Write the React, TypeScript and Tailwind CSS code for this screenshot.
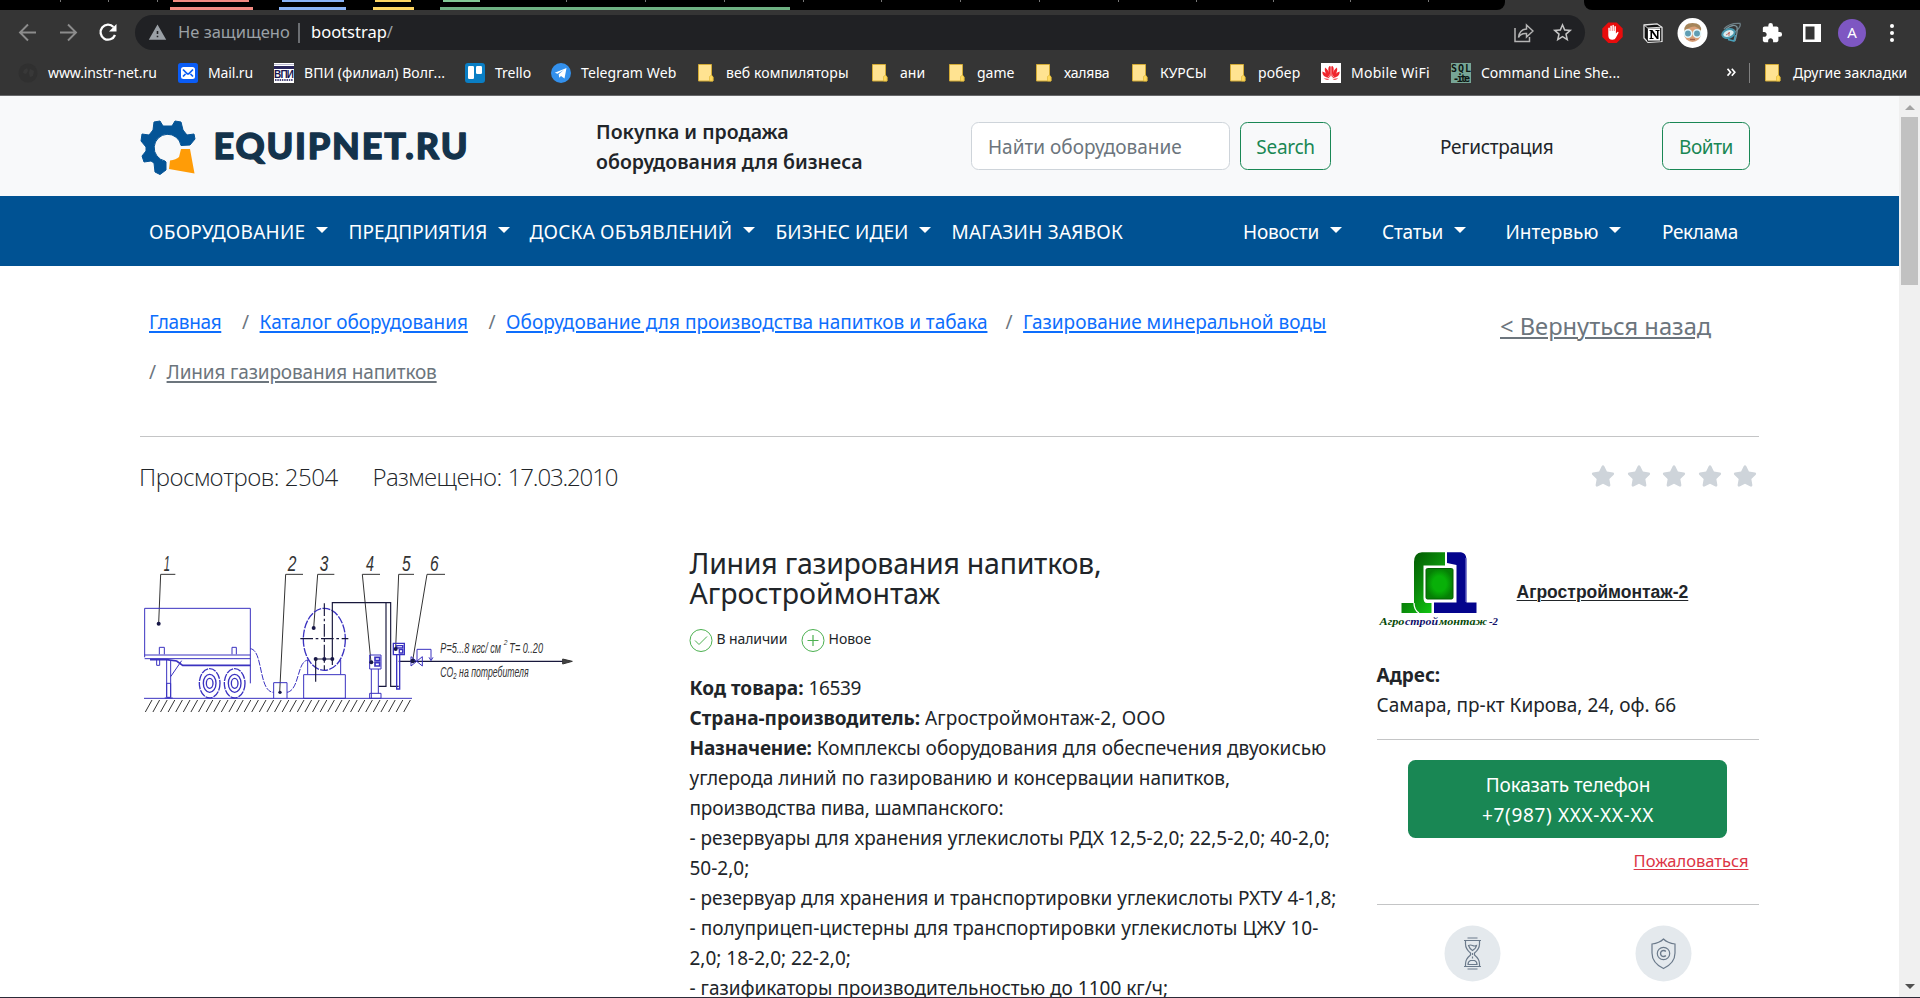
import React from "react";
import { FaStar } from "react-icons/fa";
import { MdExtension, MdStarBorder, MdWarning } from "react-icons/md";

const Folder = () => (
  <svg width="20" height="20" viewBox="0 0 20 20">
    <path d="M2.500 1.500h13v11l1.500 1.500v4h-14.500z" fill="#ffe391" stroke="#d3ab35" strokeWidth="1" />
    <path d="M13.500 18v-4.500l2-1.500 1.500 2v4z" fill="#ffd95c" stroke="#e0b93c" strokeWidth=".7" />
  </svg>
);

const Globe = () => (
  <svg width="20" height="20" viewBox="0 0 20 20">
    <circle cx="10" cy="10" r="9.500" fill="#303030" />
    <path d="M6 7l3-2 1 3-2 3-3-1zM12 6l4 2-1 5-3 1-1-4z" fill="#383838" />
  </svg>
);

const Mail = () => (
  <svg width="20" height="20" viewBox="0 0 20 20">
    <rect width="20" height="20" rx="2.500" fill="#0a5cf5" />
    <rect x="3" y="4" width="14" height="12" rx="2.500" fill="#fff" />
    <path d="M5 6.500l4 4q1 .8 2 0l4-4M5 13.500l2.500-2.500M15 13.500l-2.500-2.500" stroke="#0a5cf5" strokeWidth="1.700" fill="none" />
  </svg>
);

const Vpi = () => (
  <svg width="20" height="20" viewBox="0 0 20 20">
    <rect width="20" height="20" fill="#fff" />
    <rect y="3" width="20" height="3" fill="#29265c" />
    <path d="M0 1.500h20" stroke="#aaa8c4" strokeWidth=".8" />
    <text x="0" y="14.500" fontSize="10" fontWeight="900" fontFamily="Liberation Sans" fill="#19164f" textLength="20">ВПИ</text>
    <path d="M1 17h18" stroke="#4e4b7a" strokeWidth="2" strokeDasharray="1.500 .8" />
  </svg>
);

const Trello = () => (
  <svg width="20" height="20" viewBox="0 0 20 20">
    <rect width="20" height="20" rx="3" fill="#0a7ec4" />
    <rect x="3" y="3" width="6" height="13" rx="1.200" fill="#fff" />
    <rect x="11" y="3" width="6" height="8" rx="1.200" fill="#fff" />
  </svg>
);

const Telegram = () => (
  <svg width="20" height="20" viewBox="0 0 20 20">
    <circle cx="10" cy="10" r="10" fill="#3390ec" />
    <path d="M3.800 9.800L15.500 5l-2 10.500-3.500-2.600-1.800 1.800-.5-3.500 5-4.300-6.200 3.900z" fill="#fff" />
  </svg>
);

const Huawei = () => (
  <svg width="20" height="20" viewBox="0 0 20 20">
    <rect width="20" height="20" fill="#fff" />
    <g fill="#f0252d">
      <path d="M9.700 14Q5.500 6 8.500 3q1-.5 1.200 1zM10.300 14q4.200-8 1.200-11-1-.5-1.200 1zM9 14.500Q2.500 10 4 4.500q4 2 5 10zM11 14.500q6.500-4.500 5-10-4 2-5 10zM8.500 15.200Q1 14 1.300 8.500q4 1 7.200 6.700zM11.500 15.200q7.500-1.200 7.200-6.700-4 1-7.200 6.700zM8.300 15.900q-3 2-5.600-.6zM11.700 15.900q3 2 5.600-.6z" />
    </g>
  </svg>
);

const Sqlite = () => (
  <svg width="20" height="20" viewBox="0 0 20 20">
    <rect width="20" height="20" fill="#77a595" />
    <g fontFamily="DejaVu Sans Mono" fontWeight="700" fontSize="10" fill="#0c1512">
      <text x="0" y="9" textLength="20">SQL</text>
      <text x="2" y="18.500" textLength="17">-ite</text>
    </g>
  </svg>
);

const bookmarks: [React.FC, string, string, string][] = [
  [Globe, "www.instr-net.ru", "w-[160px]", "tracking-[-0.1px]"],
  [Mail, "Mail.ru", "w-[96px]", "tracking-[-0.15px]"],
  [Vpi, "ВПИ (филиал) Волг...", "w-[191px]", "tracking-[0.05px]"],
  [Trello, "Trello", "w-[86px]", ""],
  [Telegram, "Telegram Web", "w-[145px]", "tracking-[0.1px]"],
  [Folder, "веб компиляторы", "w-[174px]", "tracking-[0.1px]"],
  [Folder, "ани", "w-[77px]", ""],
  [Folder, "game", "w-[87px]", ""],
  [Folder, "халява", "w-[96px]", "tracking-[-0.2px]"],
  [Folder, "КУРСЫ", "w-[98px]", ""],
  [Folder, "робер", "w-[93px]", "tracking-[0.2px]"],
  [Huawei, "Mobile WiFi", "w-[130px]", "tracking-[0.25px]"],
  [Sqlite, "Command Line She...", "w-[170px]", ""],
];

const tabSeams = [
  "left-[60px]", "left-[108px]", "left-[157px]", "left-[566px]", "left-[645px]", "left-[724px]", "left-[803px]", "left-[881px]",
  "left-[960px]", "left-[1039px]", "left-[1118px]", "left-[1196px]", "left-[1273px]", "left-[1350px]", "left-[1428px]",
];

const tabMarks = [
  "left-[173px] w-[76px] h-[2px] bg-[#f28b82]", "left-[282px] w-[62px] h-[2px] bg-[#8ab4f8]",
  "left-[375px] w-[36px] h-[2px] bg-[#fdd663]", "left-[443px] w-[37px] h-[2px] bg-[#81c995]",
  "left-[170px] top-[7px] w-[83px] h-[3px] bg-[#f28b82]", "left-[279px] top-[7px] w-[67px] h-[3px] bg-[#8ab4f8]",
  "left-[373px] top-[7px] w-[41px] h-[3px] bg-[#fdd663]", "left-[440px] top-[7px] w-[350px] h-[3px] bg-[#6fb183]",
];

function Browser() {
  return (
    <header className="h-24 border-b border-[#67686a] bg-[#353535] font-['Noto_Sans','Open_Sans',sans-serif]">
      <div className="relative flex h-2.5 justify-between">
        <div className="w-[1505px] rounded-br-lg bg-black" />
        <div className="w-[336px] rounded-bl-lg bg-black" />
        {tabSeams.map((c) => <i key={c} className={`absolute top-0 h-0.5 w-px bg-[#777] ${c}`} />)}
        {tabMarks.map((c) => <i key={c} className={`absolute top-0 ${c}`} />)}
      </div>
      <div className="flex h-[45px] items-center">
        <svg className="ml-[18px] shrink-0" width="102" height="24" viewBox="0 0 102 24" fill="none" stroke="#8c8c8c" strokeWidth="1.900">
          <path d="M18 11.500H2.500M10 3.500L2 11.500l8 8M42 11.500h15M50 3.500l8 8-8 8" />
          <path d="M95.500 6A7.500 7.500 0 1 0 97 14" stroke="#fff" strokeWidth="2.300" />
          <path d="M98.500 3v7.500h-7.500z" fill="#fff" stroke="none" />
        </svg>
        <div className="ml-[15px] flex h-[35px] w-[1450px] shrink-0 items-center rounded-full bg-[#202124] pl-[13px] text-[16.5px] text-[#9aa0a6]">
          <MdWarning className="size-[19px] shrink-0 text-[#9aa0a6]" />
          <span className="ml-[11px] w-[111px] whitespace-nowrap">Не защищено</span>
          <span className="ml-[9px] h-5 w-0.5 bg-[#6b6e72]" />
          <span className="ml-[11px] whitespace-nowrap text-white">bootstrap<span className="text-[#9aa0a6]">/</span></span>
          <svg className="ml-auto" width="20" height="20" viewBox="0 0 20 20" fill="none" stroke="#b5b5b5" strokeWidth="1.500">
            <path d="M1 5v13.500h14.500V14M12.500 2l6.500 6-6.500 6v-3.500q-6-.5-8 4 1-8 8-8.500z" />
          </svg>
          <MdStarBorder className="mr-[11px] ml-[17px] size-[23px] text-[#c4c4c4]" />
        </div>
        <div className="ml-[17px] flex items-center">
          <svg width="21" height="21" viewBox="0 0 21 21">
            <path d="M6.300.5h8.400l6 6v8.400l-6 6H6.300l-6-6V6.500z" fill="#e80c0c" />
            <path d="M6.300 11V6q.9-1 1.500 0v3h.5V4q.9-1 1.600 0v5h.5V3.300q.8-.9 1.500 0V9h.5V4.500q.9-.8 1.500 0v7l1.500-1.600q1.500-.2 1 1L14 15.500q-1 2.200-3.500 2.200-4.200 0-4.200-4.200z" fill="#fff" />
          </svg>
          <svg className="ml-[20px]" width="20" height="20" viewBox="0 0 20 20">
            <path d="M1 2L14 .8l5 3.500v14L5 19.400 1 15z" fill="#111" stroke="#e4e4e4" strokeWidth="1.300" />
            <rect x="4.500" y="5" width="13" height="13" fill="#fff" stroke="#111" strokeWidth=".8" />
            <path d="M1.500 2.300l3.500 3M5 5l14-.8" stroke="#ddd" />
            <path d="M6.500 7h3l4.500 6.500V8h-1.500V7h4v1h-1v8h-1.700L9 9.500V15h1.500v1h-4v-1h1V8h-1z" fill="#000" />
          </svg>
          <svg className="ml-[14px]" width="32" height="32" viewBox="0 0 32 32">
            <circle cx="15.500" cy="16" r="15" fill="#fff" />
            <circle cx="15.500" cy="16.500" r="8.500" fill="#d9a078" />
            <path d="M7.500 14q-1-8 8-8 9.500 0 8.500 8-2-3.500-6-4.500-6 0-10.500 4.500z" fill="#a5855a" />
            <circle cx="11" cy="16.500" r="3.700" fill="#5f9db3" stroke="#e3f6fa" strokeWidth="1.500" />
            <circle cx="20" cy="16.500" r="3.700" fill="#5f9db3" stroke="#e3f6fa" strokeWidth="1.500" />
            <path d="M13 22.500h5" stroke="#a05f49" strokeWidth="1.400" />
          </svg>
          <svg className="ml-[12px]" width="21" height="21" viewBox="0 0 21 21" fill="none">
            <path d="M3 7Q8 1 19 1.500q1.500 3-5 8.500" stroke="#6d7f86" strokeWidth="1.300" />
            <path d="M5 7Q13 1 16 5q1 4-2 14" stroke="#7d949c" strokeWidth="1.300" />
            <ellipse cx="7.500" cy="11.500" rx="6.300" ry="4.200" transform="rotate(-18 7.500 11.500)" fill="#d8ecef" stroke="#4697ad" strokeWidth="2" />
            <path d="M7 17.500l6 1.500 1.500-6" stroke="#4aa3bd" strokeWidth="1.500" />
            <path d="M5 13l4-2.500M8 14V10" stroke="#c04d40" strokeWidth=".8" />
          </svg>
          <MdExtension className="ml-[19px] size-[22px] text-white" />
          <svg className="ml-[20px]" width="18" height="18" viewBox="0 0 18 18"><path d="M0 0h18v18H0zM2.500 2.500v13h9v-13z" fill="#fff" fillRule="evenodd" /></svg>
          <span className="ml-[17px] flex size-7 items-center justify-center rounded-full bg-[#7e57c2] text-[15px] text-white">A</span>
          <span className="ml-[24px] flex flex-col gap-[3px]">
            <i className="size-1 rounded-full bg-white" /><i className="size-1 rounded-full bg-white" /><i className="size-1 rounded-full bg-white" />
          </span>
        </div>
      </div>
      <nav className="flex h-[35px] items-center pl-[18px] text-[14px] text-white">
        {bookmarks.map(([Icon, label, width, tracking]) => (
          <span key={label} className={`flex shrink-0 items-center gap-2.5 whitespace-nowrap ${width}`}>
            <Icon /><span className={`-mt-px ${tracking}`}>{label}</span>
          </span>
        ))}
        <svg className="ml-[106px] shrink-0" width="9" height="9" viewBox="0 0 9 9" fill="none" stroke="#fff" strokeWidth="1.700"><path d="M.5.8l3 3.500-3 3.500M4.800.8l3 3.500-3 3.500" /></svg>
        <span className="ml-[13px] h-5 w-px shrink-0 bg-[#808080]" />
        <span className="ml-[13px] flex shrink-0 items-center gap-2.5 whitespace-nowrap"><Folder /><span className="-mt-px">Другие закладки</span></span>
      </nav>
    </header>
  );
}

const Logo = () => (
  <svg width="328" height="58" viewBox="140 119 328 58">
    <path d="M154 122l6-1 3 5h9l3-5 6 1 2 8 4 5 7-1 1 5-5 6-9 .5A13.500 13.500 0 1 0 165 161l1 1v8l-6 4.500-5-2.500-1-9-3-2-7 1-2-6 4-5v-4l-5-6 1-7 7 1 4-5z" fill="#045496" stroke="#045496" strokeLinejoin="round" />
    <path d="M181 149h9l4.500 24.500-25.500-4.500 1-8.500q6-1 9-3.500z" fill="#ff9c07" />
    <text x="213.500" y="158.500" fontFamily="Lato, sans-serif" fontWeight="900" fontSize="36" fill="#14334b" stroke="#14334b" strokeWidth="1.300" strokeLinejoin="round" textLength="254" lengthAdjust="spacing">EQUIPNET.RU</text>
  </svg>
);

const menu: [string, string, boolean][] = [
  ["ОБОРУДОВАНИЕ", "w-[199.500px] tracking-[0.25px]", true],
  ["ПРЕДПРИЯТИЯ", "w-[181px]", true],
  ["ДОСКА ОБЪЯВЛЕНИЙ", "w-[246px] tracking-[0.2px]", true],
  ["БИЗНЕС ИДЕИ", "w-[176px] tracking-[0.1px]", true],
  ["МАГАЗИН ЗАЯВОК", "w-[291.500px] tracking-[0.25px]", false],
  ["Новости", "w-[139px] tracking-[-0.2px]", true],
  ["Статьи", "w-[123.500px] tracking-[-0.2px]", true],
  ["Интервью", "w-[156.500px]", true],
  ["Реклама", "w-[80px] tracking-[-0.4px]", false],
];

const Caret = () => <svg className="mb-1 ml-[10.500px]" width="12" height="6" viewBox="0 0 12 6"><path d="M0 0h12L6 6z" fill="#fff" /></svg>;

const link = "underline decoration-[1.500px] underline-offset-2 whitespace-nowrap";

function Diagram() {
  return (
    <svg width="440" height="170" viewBox="30 30 1320 510" fill="none" strokeWidth="3" stroke="#3a32c0">
      <g stroke="#333" strokeWidth="3">
        <path d="M136 103H92L86 250M519 103H467L449 457M613 103H563L551 264M750 103H697L723 367M852 103H806L797 325M945 103H891L848 362" />
      </g>
      <g fill="#333" stroke="none" fontFamily="Liberation Sans Narrow, Liberation Sans" fontStyle="italic" fontSize="64">
        <text x="101" y="94" textLength="19" lengthAdjust="spacingAndGlyphs">1</text>
        <text x="473" y="94" textLength="26" lengthAdjust="spacingAndGlyphs">2</text>
        <text x="569" y="94" textLength="26" lengthAdjust="spacingAndGlyphs">3</text>
        <text x="708" y="94" textLength="24" lengthAdjust="spacingAndGlyphs">4</text>
        <text x="816" y="94" textLength="26" lengthAdjust="spacingAndGlyphs">5</text>
        <text x="900" y="94" textLength="26" lengthAdjust="spacingAndGlyphs">6</text>
      </g>
      <path d="M44 352V205H361V430M44 345H361M44 356H361M88 343V322H103V343M306 343V322H319V343M80 360V376H89V360M110 360V472M122 360V472M104 474H128M155 362L122 410" />
      <path d="M60 359H110L140 363 158 376H361" strokeWidth="5" />
      <path d="M110 430h12v42h-12z" />
      {[239, 314].map((x) => (
        <g key={x} strokeWidth="4">
          <ellipse cx={x} cy="430" rx="31" ry="44" strokeDasharray="22 3" />
          <ellipse cx={x} cy="430" rx="19" ry="27" /><ellipse cx={x} cy="430" rx="10" ry="15" />
        </g>
      ))}
      <path d="M361 326C400 330 385 456 431 457M471 457C510 450 500 360 536 360" strokeDasharray="18 4" />
      <path d="M431 475V428H471V475" />
      <ellipse cx="583" cy="298" rx="63" ry="93" strokeDasharray="24 4" strokeWidth="4" />
      <path d="M533 360V403M632 360V403M521 475V404H646V475Z" />
      <g stroke="#18183c" strokeWidth="3.500">
        <path d="M583 190V390M511 296H655" strokeDasharray="38 8 8 8" />
        <path d="M557 357V425M557 357H607M607 375V188H782V439H806M768 188V439H745M806 364H1310" />
      </g>
      <path d="M719 345H753V387H719ZM724 475V387M745 387V460M719 475V460H753V475Z" />
      <path d="M735 352h14v10h-14zM735 368h14v10h-14z" strokeWidth="5" />
      <path d="M790 310H823V344H790ZM800 344V447H809V344M800 317h18v7h-18zM808 329h10v10h-10z" strokeWidth="4" />
      <path d="M843 350V378L877 350V378L843 350M861 362V328H903V360M897 352l6 10 6-10" />
      <path d="M1298 357l29 7-29 8z" fill="#444" stroke="#333" />
      <g fill="#181848" stroke="none">
        <circle cx="86" cy="251" r="6" /><circle cx="450" cy="457" r="5" /><circle cx="551" cy="264" r="6" /><circle cx="557" cy="357" r="6" />
        <circle cx="583" cy="357" r="6" /><circle cx="607" cy="357" r="6" /><circle cx="724" cy="367" r="6" /><circle cx="797" cy="327" r="6" /><circle cx="848" cy="363" r="7" />
      </g>
      <path d="M42 475H846" strokeWidth="3" />
      <path stroke="#333" strokeWidth="3" d={Array.from({ length: 35 }, (_, i) => `M${66 + i * 22.8} 480L${46 + i * 22.8} 516`).join("")} />
      <g fill="#333" stroke="none" fontFamily="Liberation Sans" fontStyle="italic" fontSize="44">
        <text x="931" y="338" textLength="182" lengthAdjust="spacingAndGlyphs">P=5...8 кгс/ см</text>
        <text x="1121" y="315" fontSize="20">2</text>
        <text x="1138" y="338" textLength="101" lengthAdjust="spacingAndGlyphs">T= 0..20</text>
        <text x="931" y="411" fontSize="42" textLength="265" lengthAdjust="spacingAndGlyphs">CO₂ на потребителя</text>
      </g>
    </svg>
  );
}

const AgroLogo = () => (
  <svg width="124" height="80" viewBox="0 0 124 80">
    <defs>
      <radialGradient id="core"><stop offset=".5" stopColor="#08b008" /><stop offset="1" stopColor="#058005" /></radialGradient>
      <linearGradient id="leaf" x1="0" x2="1" y1="0" y2="1"><stop offset="0" stopColor="#004600" /><stop offset=".5" stopColor="#0a8a0a" /><stop offset=".85" stopColor="#12c812" /><stop offset="1" stopColor="#045004" /></linearGradient>
    </defs>
    <path d="M68 2.300H45Q37 3 37 12V53H24.500V63H54.500V53H50Q46.500 53 46.500 48V15.500H68Z" fill="url(#leaf)" />
    <path d="M37 53q0 7 5 10" stroke="#fff" strokeWidth="1.300" fill="none" />
    <rect x="49" y="18.500" width="27" height="30.500" rx="1.500" fill="url(#core)" stroke="#046004" />
    <path d="M70 2.300H84Q89 3 89.500 9V52.500H99.500V63H57V52.500H79.500V15L70 13Z" fill="#04048c" />
    <path d="M89 8v44" stroke="#8b8bd8" strokeWidth="1" />
    <g fontFamily="Liberation Serif" fontStyle="italic" fontWeight="700" fontSize="10.500">
      <text x="2.500" y="75" fill="#064a06" textLength="25" lengthAdjust="spacingAndGlyphs">Агро</text>
      <text x="28" y="75" fill="#10106a" textLength="33" lengthAdjust="spacingAndGlyphs">строй</text>
      <text x="62" y="75" fill="#064a06" textLength="48" lengthAdjust="spacingAndGlyphs">монтаж</text>
      <text x="112" y="75" fill="#10106a" textLength="9" lengthAdjust="spacingAndGlyphs">-2</text>
    </g>
  </svg>
);

function Product() {
  return (
    <section className="w-[687px] whitespace-nowrap">
      <h1 className="text-[28.500px] leading-[30px]"><span className="tracking-[-0.25px]">Линия газирования напитков,</span><br />Агростроймонтаж</h1>
      <div className="mt-[20px] -ml-px flex h-6 items-center text-[14px]">
        <svg width="24" height="24" viewBox="0 0 24 24" fill="none" stroke="#4cb050"><circle cx="12" cy="12.500" r="11" /><path d="M6 12.500l4 4L18 8.500" /></svg>
        <span className="-mt-[3px] ml-[4px] w-[84px] tracking-[-0.1px]">В наличии</span>
        <svg width="24" height="24" viewBox="0 0 24 24" fill="none" stroke="#4cb050"><circle cx="12" cy="12.500" r="11" /><path d="M6.500 12.500h11M12 7v11" strokeWidth="1.200" /></svg>
        <span className="-mt-[3px] ml-[4px]">Новое</span>
      </div>
      <div className="mt-[21px] leading-[30px]">
        <b>Код товара:</b> <span className="tracking-[-0.35px]">16539</span><br />
        <b>Страна-производитель:</b> <span className="tracking-[0.15px]">Агростроймонтаж-2, ООО</span><br />
        <b className="tracking-[-0.2px]">Назначение:</b> Комплексы оборудования для обеспечения двуокисью<br />
        углерода линий по газированию и консервации напитков,<br />
        <span className="tracking-[-0.15px]">производства пива, шампанского:</span><br />
        - резервуары для хранения углекислоты РДХ 12,5-2,0; 22,5-2,0; 40-2,0;<br />
        50-2,0;<br />
        - резервуар для хранения и транспортировки углекислоты РХТУ 4-1,8;<br />
        <span className="tracking-[0.04px]">- полуприцеп-цистерны для транспортировки углекислоты ЦЖУ 10-</span><br />
        2,0; 18-2,0; 22-2,0;<br />
        - газификаторы производительностью до 1100 кг/ч;
      </div>
    </section>
  );
}

function Seller() {
  return (
    <aside className="w-[382px] whitespace-nowrap">
      <div className="flex h-[112px] pt-[2px]">
        <AgroLogo />
        <a className="mt-[29px] ml-[16px] font-['Liberation_Sans',Arial,sans-serif] text-[17.500px] font-bold underline decoration-1 underline-offset-2">Агростроймонтаж-2</a>
      </div>
      <div className="h-[79px] leading-[30px]">
        <b>Адрес:</b><br />Самара, пр-кт Кирова, 24, оф. 66
      </div>
      <hr className="border-[#c4c5c6]" />
      <button className="mx-auto mt-[20px] block h-[78px] w-[319px] rounded-[7.500px] bg-[#198754] pt-px pl-px leading-[30px] text-white">
        <span className="tracking-[-0.15px]">Показать телефон</span><br /><span className="tracking-[0.65px]">+7(987) XXX-XX-XX</span>
      </button>
      <div className="mt-[11px] flex h-[55px] justify-end pr-[10px]">
        <a className="text-[16.500px] leading-[24px] text-[#dc3545] underline decoration-1 underline-offset-2">Пожаловаться</a>
      </div>
      <hr className="border-[#c4c5c6]" />
      <div className="flex justify-around pt-[20px]">
        <svg width="57" height="57" viewBox="0 0 57 57" fill="none" stroke="#6b7a8b" strokeWidth="1.200">
          <circle cx="28.500" cy="28.500" r="28" fill="#e4e9ed" stroke="none" />
          <path d="M23.500 13h10M20 15.500h17M20 41.500h17M23.500 44h10M21.500 16v3q0 5 5 9v2q-5 4-5 9v2M35.500 16v3q0 5-5 9v2q5 4 5 9v2M24.500 20.500q2-1 4 0t4 0q-.5 3-4 5-3-2-4-5zM24 39.500q0-3 2.500-4h4q2.500 1 2.500 4zM28.500 28v2M28.500 31.500v2" />
        </svg>
        <svg width="57" height="57" viewBox="0 0 57 57" fill="none" stroke="#6b7a8b" strokeWidth="1.200">
          <circle cx="28.500" cy="28.500" r="28" fill="#e4e9ed" stroke="none" />
          <path d="M28.500 14q-4 4-11.500 5v9q0 10 11.500 15.500Q40 38 40 28v-9q-7.500-1-11.500-5z" />
          <circle cx="28.500" cy="28.500" r="6.200" /><path d="M30.800 26.500a3 3 0 1 0 0 4" strokeWidth="1.400" />
        </svg>
      </div>
    </aside>
  );
}

export default function App() {
  return (
    <div className="flex h-[998px] w-[1920px] flex-col overflow-hidden bg-white font-['Noto_Sans','Open_Sans',sans-serif] text-[19px] text-[#212529]">
      <Browser />
      <div className="flex min-h-0 flex-1 border-b border-[#2c2b38]">
        <main className="w-[1899px] overflow-hidden">
          <div className="flex h-[100px] bg-[#f8f9fa] pl-[140px] whitespace-nowrap">
            <div className="w-[456px] pt-[23px]"><Logo /></div>
            <p className="w-[375px] pt-[21px] text-[19.500px] leading-[30px] font-semibold">Покупка и продажа<br />оборудования для бизнеса</p>
            <div className="mt-[26px] flex h-12 items-center">
              <input placeholder="Найти оборудование" className="h-12 w-[259px] rounded-[7.500px] border border-[#ced4da] bg-white px-4 pt-0.5 placeholder:text-[#6c757d]" />
              <button className="ml-[10px] h-12 w-[91px] rounded-[7.500px] border border-[#198754] pt-0.5 tracking-[-0.3px] text-[#198754]">Search</button>
              <a className="ml-[109px] w-[222px] pt-0.5 tracking-[-0.3px]">Регистрация</a>
              <button className="h-12 w-[88px] rounded-[7.500px] border border-[#198754] pt-0.5 tracking-[-0.4px] text-[#198754]">Войти</button>
            </div>
          </div>
          <nav className="flex h-[70px] items-center bg-[#005293] pt-[2px] pl-[149px] whitespace-nowrap text-white">
            {menu.map(([label, cls, caret]) => (
              <a key={label} className={`flex shrink-0 items-center ${cls}`}>{label}{caret && <Caret />}</a>
            ))}
          </nav>
          <div className="mx-[140px] flex h-[171px] border-b border-[#c4c5c6] pt-[41px]">
            <ol className="flex w-[1360px] flex-wrap content-start gap-y-5 pl-[9px] leading-[30px] text-[#0d6efd]">
              <li className="w-[93px]"><a className={`tracking-[-0.35px] ${link}`}>Главная</a></li>
              <li className="w-[246.500px]"><span className="mr-[10.500px] text-[#6c757d]">/</span><a className={`tracking-[-0.05px] ${link}`}>Каталог оборудования</a></li>
              <li className="w-[517px]"><span className="mr-[10.500px] text-[#6c757d]">/</span><a className={link}>Оборудование для производства напитков и табака</a></li>
              <li className="w-[400px]"><span className="mr-[10.500px] text-[#6c757d]">/</span><a className={link}>Газирование минеральной воды</a></li>
              <li className="text-[#6c757d]"><span className="mr-[10.500px]">/</span><a className={`tracking-[-0.15px] ${link}`}>Линия газирования напитков</a></li>
            </ol>
            <a className="-mt-px text-[23.700px] leading-[40px] whitespace-nowrap text-[#6c757d] underline decoration-[1.500px] underline-offset-2">&lt; Вернуться назад</a>
          </div>
          <div className="mx-[140px] flex h-[111px] pt-[22px] font-['Open_Sans','Noto_Sans',sans-serif] text-[24px] leading-9 font-light whitespace-nowrap">
            <span className="-ml-px w-[233.500px] tracking-[-0.5px]">Просмотров: 2504</span>
            <span className="flex gap-[6px]"><span className="tracking-[-0.6px]">Размещено:</span><span className="tracking-[-1.150px]">17.03.2010</span></span>
            <span className="ml-auto flex gap-[11.500px] pt-[5px] pr-[2px] text-[#ced4da]">
              {[1, 2, 3, 4, 5].map((n) => <FaStar key={n} className="size-6" />)}
            </span>
          </div>
          <div className="mx-[140px] flex">
            <div className="w-[549.500px] pt-[2px]"><Diagram /></div>
            <Product />
            <Seller />
          </div>
        </main>
        <div className="flex w-[21px] flex-col items-center bg-[#f0f0f0]">
          <svg className="mt-[9px] shrink-0" width="10" height="5" viewBox="0 0 10 5"><path d="M0 5h10L5 0z" fill="#a3a3a3" /></svg>
          <i className="mt-[7px] h-[168px] w-[17px] shrink-0 bg-[#c1c1c1]" />
          <svg className="mt-auto mb-[8px] shrink-0" width="10" height="5" viewBox="0 0 10 5"><path d="M0 0h10L5 5z" fill="#505050" /></svg>
        </div>
      </div>
    </div>
  );
}
